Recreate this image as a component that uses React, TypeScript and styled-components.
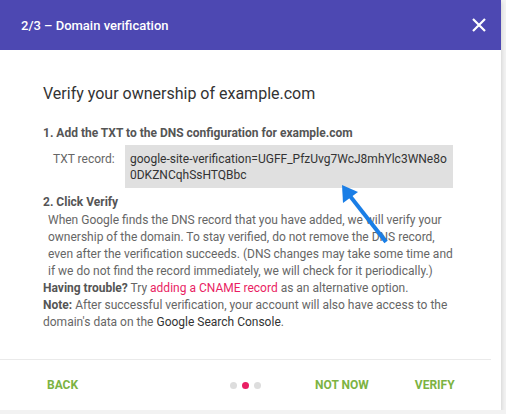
import styled, { createGlobalStyle } from "styled-components";

const GlobalStyle = createGlobalStyle`
  html, body {
    margin: 0;
    padding: 0;
    background: #f2f2f2;
    font-family: "Roboto", "Liberation Sans", sans-serif;
  }
`;

const Dialog = styled.div`
  position: relative;
  width: 501px;
  height: 410px;
  background: #fff;
  display: flex;
  flex-direction: column;
  box-shadow: 1px 2px 4px rgba(0, 0, 0, 0.12);
`;

const Header = styled.div`
  height: 50px;
  flex-shrink: 0;
  background: #4d48b2;
  color: #fff;
  display: flex;
  align-items: center;
  justify-content: space-between;
  padding: 0 10px 0 21px;
`;

const HeaderTitle = styled.div`
  font-size: 13px;
  font-weight: 500;
`;

const CloseButton = styled.button`
  border: none;
  background: transparent;
  padding: 0;
  width: 24px;
  height: 24px;
  display: flex;
  align-items: center;
  justify-content: center;
  cursor: pointer;
`;

const Content = styled.div`
  flex: 1;
  padding: 33px 43px 0;
`;

const Heading = styled.h2`
  margin: 0 0 20px;
  font-size: 16px;
  line-height: 22px;
  font-weight: 400;
  color: #333;
`;

const StepTitle = styled.div`
  font-size: 12px;
  line-height: 17px;
  font-weight: 700;
  color: #555;
`;

const RecordRow = styled.div`
  display: flex;
  align-items: flex-start;
  margin: 3px 0 6px 10px;
`;

const RecordLabel = styled.div`
  width: 72px;
  font-size: 12px;
  line-height: 16px;
  padding-top: 6px;
  color: #666;
`;

const RecordValue = styled.div`
  width: 318px;
  background: #e0e0e0;
  padding: 6px 5px 5px;
  font-size: 12px;
  line-height: 16px;
  color: #333;
  word-break: break-all;
  min-height: 32px;
`;

const Paragraph = styled.p<{ $indent?: boolean }>`
  margin: ${(p) => (p.$indent ? "1px 0 0" : "0")};
  padding-left: ${(p) => (p.$indent ? "5px" : "0")};
  font-size: 12px;
  line-height: 17px;
  color: #666;

  b {
    color: #555;
  }
`;

const Link = styled.a`
  color: #e91e63;
  text-decoration: none;
`;

const Dark = styled.span`
  color: #333;
`;

const Footer = styled.div`
  height: 50px;
  flex-shrink: 0;
  margin-right: 10px;
  border-top: 1px solid #eaeaea;
  display: flex;
  align-items: center;
  padding: 0 47px;
`;

const FooterButton = styled.button<{ $gap?: number }>`
  border: none;
  background: transparent;
  padding: 0;
  margin-left: ${(p) => p.$gap ?? 0}px;
  font-family: inherit;
  font-size: 12px;
  font-weight: 700;
  color: #7cb342;
  text-transform: uppercase;
  white-space: nowrap;
  cursor: pointer;
`;

const Dots = styled.div`
  display: flex;
  gap: 5px;
  margin-left: 152px;
`;

const Dot = styled.span<{ $active?: boolean }>`
  width: 7px;
  height: 7px;
  border-radius: 50%;
  background: ${(p) => (p.$active ? "#e91e63" : "#ddd")};
`;

const ArrowLayer = styled.svg`
  position: absolute;
  left: 0;
  top: 0;
  pointer-events: none;
`;

export default function App() {
  return (
    <>
      <GlobalStyle />
      <Dialog>
        <Header>
          <HeaderTitle>2/3 – Domain verification</HeaderTitle>
          <CloseButton aria-label="Close">
            <svg width="14" height="14" viewBox="0 0 14 14">
              <path d="M1 1L13 13M13 1L1 13" stroke="#fff" strokeWidth="2.2" />
            </svg>
          </CloseButton>
        </Header>
        <Content>
          <Heading>Verify your ownership of example.com</Heading>
          <StepTitle>1. Add the TXT to the DNS configuration for example.com</StepTitle>
          <RecordRow>
            <RecordLabel>TXT record:</RecordLabel>
            <RecordValue>
              google-site-verification=UGFF_PfzUvg7WcJ8mhYlc3WNe8o0DKZNCqhSsHTQBbc
            </RecordValue>
          </RecordRow>
          <StepTitle>2. Click Verify</StepTitle>
          <Paragraph $indent>
            When Google finds the DNS record that you have added, we will verify your
            ownership of the domain. To stay verified, do not remove the DNS record,
            even after the verification succeeds. (DNS changes may take some time and
            if we do not find the record immediately, we will check for it periodically.)
          </Paragraph>
          <Paragraph>
            <b>Having trouble?</b> Try <Link href="#">adding a CNAME record</Link> as an
            alternative option.
          </Paragraph>
          <Paragraph>
            <b>Note:</b> After successful verification, your account will also have access
            to the domain's data on the <Dark>Google Search Console</Dark>.
          </Paragraph>
        </Content>
        <Footer>
          <FooterButton>Back</FooterButton>
          <Dots>
            <Dot />
            <Dot $active />
            <Dot />
          </Dots>
          <FooterButton $gap={54}>Not now</FooterButton>
          <FooterButton $gap={46}>Verify</FooterButton>
        </Footer>
        <ArrowLayer width="501" height="410">
          <line x1="386" y1="242" x2="350" y2="196" stroke="#1a7ee6" strokeWidth="4" />
          <polygon points="342,185 343,203 358,192" fill="#1a7ee6" />
        </ArrowLayer>
      </Dialog>
    </>
  );
}
